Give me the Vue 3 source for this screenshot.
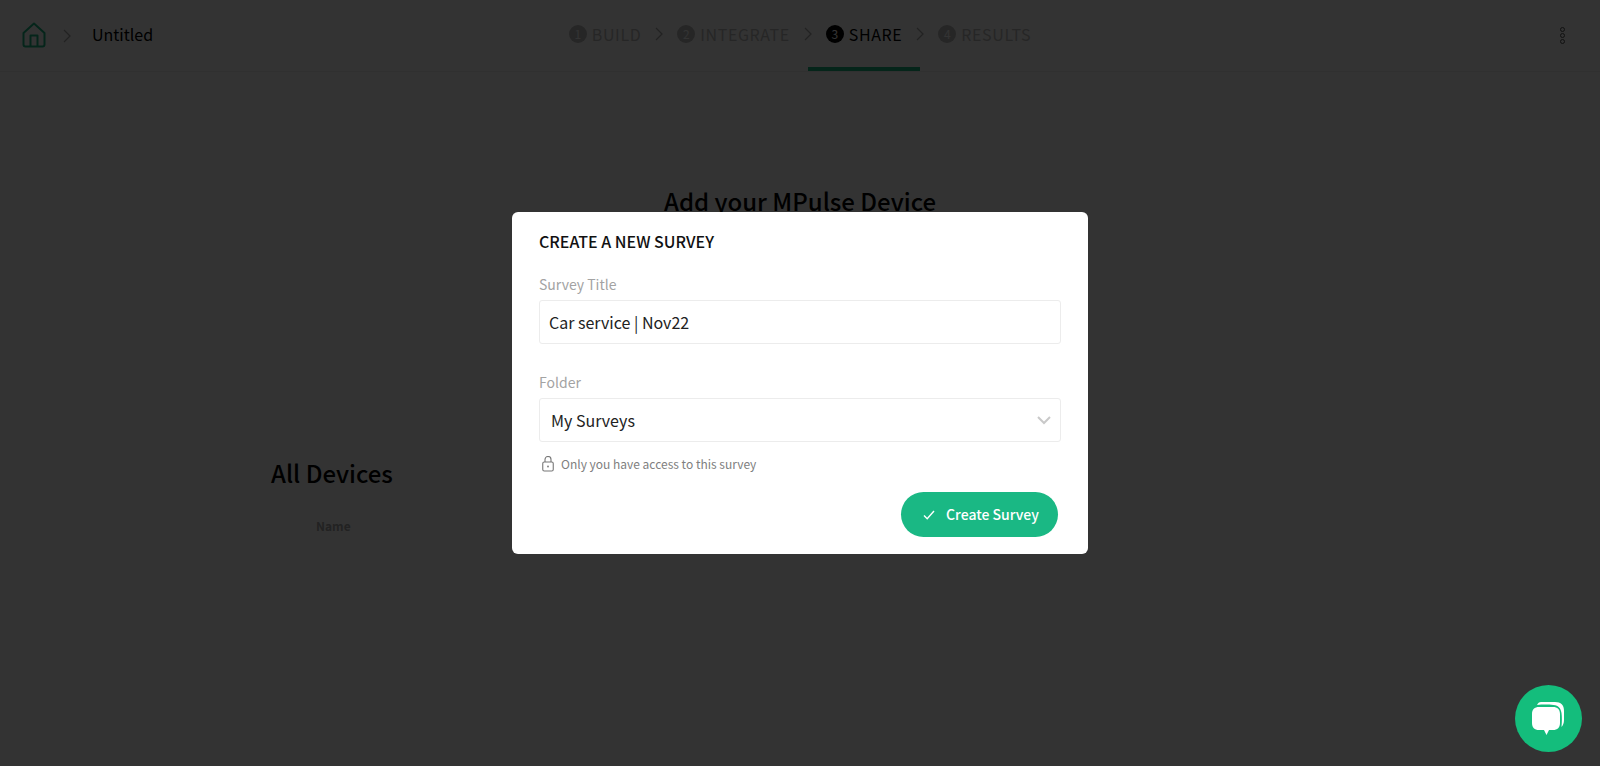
<template>
  <div class="page">
    <header class="top-bar">
      <div class="crumbs">
        <svg class="home-icon" width="24" height="26" viewBox="0 0 24 26" fill="none">
          <path d="M1.500 11 12 1.500 22.500 11v11.500a2 2 0 0 1-2 2h-17a2 2 0 0 1-2-2z" />
          <path d="M8.500 24.500V13.500h7v11" />
        </svg>
        <svg class="chevron" width="8" height="14" viewBox="0 0 8 14" fill="none">
          <path d="M1 1l6 6-6 6" />
        </svg>
        <span class="doc-title">Untitled</span>
      </div>

      <nav class="steps">
        <template v-for="(step, i) in steps" :key="step">
          <div class="step" :class="{ active: i === activeStep }">
            <span class="step-num">{{ i + 1 }}</span>
            <span class="step-label">{{ step }}</span>
          </div>
          <svg v-if="i < steps.length - 1" class="chevron step-chevron" width="8" height="14" viewBox="0 0 8 14" fill="none">
            <path d="M1 1l6 6-6 6" />
          </svg>
        </template>
      </nav>

      <div class="more">
        <span></span>
        <span></span>
        <span></span>
      </div>
    </header>

    <main class="content">
      <h1 class="device-title">Add your MPulse Device</h1>
      <section class="devices">
        <h2>All Devices</h2>
        <div class="col-name">Name</div>
      </section>
    </main>

    <div class="overlay">
      <div class="modal">
        <h3>CREATE A NEW SURVEY</h3>

        <label class="field-label">Survey Title</label>
        <div class="input title-input">Car service | Nov22</div>

        <label class="field-label folder-label">Folder</label>
        <div class="input select-input">
          <span>My Surveys</span>
          <svg width="14" height="9" viewBox="0 0 14 9" fill="none">
            <path d="M1 1l6 6 6-6" />
          </svg>
        </div>

        <div class="access-note">
          <svg width="12" height="16" viewBox="0 0 12 16" fill="none">
            <rect x="0.750" y="6" width="10.500" height="9" rx="1.500" />
            <path d="M3 6V3.500a3 3 0 0 1 6 0V6" />
            <circle cx="6" cy="10.500" r="0.900" />
          </svg>
          <span>Only you have access to this survey</span>
        </div>

        <div class="actions">
          <button class="create-btn">
            <svg width="12" height="10" viewBox="0 0 12 10" fill="none">
              <path d="M1 5.500 4.200 8.700 11 1" />
            </svg>
            Create Survey
          </button>
        </div>
      </div>
    </div>

    <div class="chat-bubble">
      <svg width="40" height="40" viewBox="0 0 40 40" fill="none">
        <path class="back" d="M12 3h14c6 0 9 3 9 9v9c0 3-1 5.500-2.500 7 .5-6 .5-10 0-14-.6-4.500-3-7.500-8-8-5.500-.6-11-.6-16.500 0C9 4 10 3 12 3z" />
        <path class="front" d="M10 8h14c4.500 0 7 2.500 7 7v9c0 4.500-2.500 7-7 7h-4l-2.500 5-2.500-5h-5c-4.500 0-7-2.500-7-7v-9c0-4.500 2.500-7 7-7z" />
      </svg>
    </div>
  </div>
</template>

<script setup>
const steps = ['BUILD', 'INTEGRATE', 'SHARE', 'RESULTS']
const activeStep = 2
</script>

<style>
html,
body {
  margin: 0;
  background: #fff;
}
</style>

<style scoped>
.page {
  height: 766px;
  overflow: hidden;
  background: #fff;
  font-family: "Noto Sans CJK JP", "Noto Sans", sans-serif;
  color: #000;
}

.top-bar {
  height: 72px;
  display: grid;
  grid-template-columns: 1fr auto 1fr;
  align-items: stretch;
  border-bottom: 1px solid #f0f0f0;
  box-sizing: border-box;
}

.crumbs {
  display: flex;
  align-items: center;
  padding-left: 22px;
}

.home-icon {
  margin-top: -1px;
}

.home-icon path {
  stroke: #1ab884;
  stroke-width: 2;
  stroke-linejoin: round;
}

.chevron path {
  stroke: #aaa;
  stroke-width: 1.300;
}

.crumbs .chevron {
  margin-left: 17px;
}

.doc-title {
  margin-left: 21px;
  font-size: 16px;
  line-height: 24px;
  margin-top: -4px;
}

.steps {
  display: flex;
  align-items: stretch;
}

.step {
  display: flex;
  align-items: center;
  gap: 5px;
  padding: 0 18px;
  color: #bdbdbd;
  border-bottom: 4px solid transparent;
  font-size: 16px;
  letter-spacing: 0.600px;
}

.step.active {
  color: #000;
  border-bottom-color: #1ab884;
}

.step-num {
  width: 18px;
  height: 18px;
  border-radius: 50%;
  background: #bdbdbd;
  color: #fff;
  font-size: 12px;
  letter-spacing: 0;
  display: flex;
  align-items: center;
  justify-content: center;
}

.step.active .step-num {
  background: #000;
}

.step-chevron {
  align-self: center;
  margin: -4px -4px 0;
}

.more {
  display: flex;
  flex-direction: column;
  justify-content: center;
  align-items: flex-end;
  gap: 1px;
  padding-right: 35px;
}

.more span {
  width: 5px;
  height: 5px;
  box-sizing: border-box;
  border: 1px solid #555;
  border-radius: 50%;
}

.content {
  display: flex;
  flex-direction: column;
}

.device-title {
  margin: 109px 0 0;
  text-align: center;
  font-size: 24px;
  line-height: 40px;
  font-weight: 500;
}

.devices {
  margin-top: 232px;
  padding-left: 271px;
}

.devices h2 {
  margin: 0;
  font-size: 24px;
  line-height: 40px;
  font-weight: 500;
}

.col-name {
  margin-top: 23px;
  padding-left: 45px;
  font-size: 12px;
  line-height: 20px;
  font-weight: 700;
  color: #aaa;
}

.overlay {
  position: fixed;
  inset: 0;
  background: rgba(0, 0, 0, 0.8);
  display: flex;
  justify-content: center;
  align-items: flex-start;
}

.modal {
  margin-top: 212px;
  width: 576px;
  height: 342px;
  box-sizing: border-box;
  padding: 18px 27px 0;
  background: #fff;
  border-radius: 6px;
}

.modal h3 {
  margin: 0;
  font-size: 16px;
  line-height: 22px;
  font-weight: 500;
  color: #111;
}

.field-label {
  display: block;
  margin-top: 21px;
  font-size: 14px;
  line-height: 22px;
  color: #a3a3a3;
}

.folder-label {
  margin-top: 27px;
}

.input {
  height: 44px;
  margin-top: 5px;
  box-sizing: border-box;
  border: 1px solid #ececec;
  border-radius: 3px;
  display: flex;
  align-items: center;
  font-size: 16px;
  color: #222;
}

.title-input {
  padding-left: 9px;
}

.select-input {
  padding: 0 9px 1px 11px;
  justify-content: space-between;
}

.select-input svg {
  margin-top: 2px;
}

.select-input svg path {
  stroke: #c9c9c9;
  stroke-width: 2;
}

.access-note {
  margin-top: 12px;
  padding-left: 3px;
  display: flex;
  align-items: center;
  gap: 7px;
  font-size: 12px;
  line-height: 20px;
  color: #808080;
}

.access-note svg rect,
.access-note svg path {
  stroke: #777;
  stroke-width: 1.100;
}

.access-note svg circle {
  fill: #777;
}

.actions {
  margin-top: 18px;
  display: flex;
  justify-content: flex-end;
  padding-right: 3px;
}

.create-btn {
  width: 157px;
  height: 45px;
  border: none;
  border-radius: 23px;
  background: #1ab884;
  color: #fff;
  font-family: inherit;
  font-size: 14px;
  font-weight: 500;
  display: flex;
  align-items: center;
  justify-content: center;
  gap: 11px;
  padding: 0 0 2px 3px;
}

.create-btn svg path {
  stroke: #fff;
  stroke-width: 1.400;
}

.create-btn svg {
  margin-top: 2px;
}

.chat-bubble {
  position: fixed;
  right: 18px;
  bottom: 14px;
  width: 67px;
  height: 67px;
  border-radius: 50%;
  background: #14bd7c;
  display: flex;
  align-items: center;
  justify-content: center;
}

.chat-bubble .back,
.chat-bubble .front {
  fill: #fff;
}
</style>
